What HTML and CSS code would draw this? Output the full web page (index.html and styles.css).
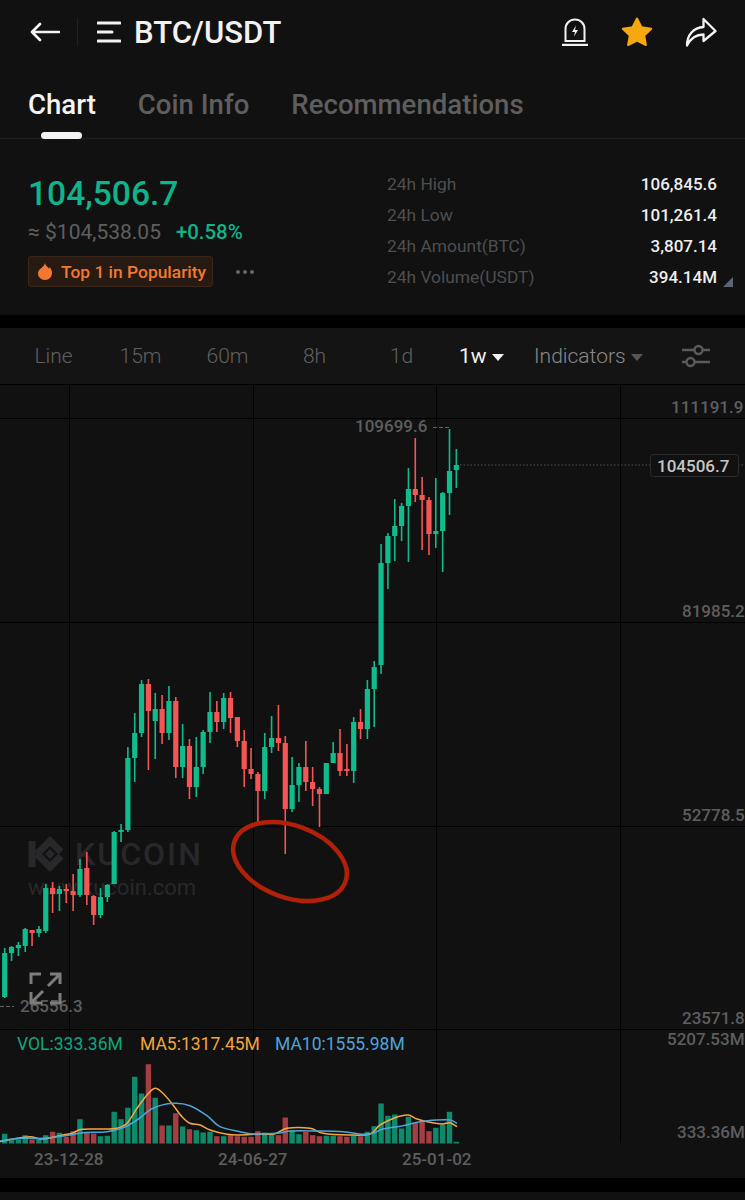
FILE: index.html
```html
<!DOCTYPE html>
<html lang="en">
<head>
    <meta charset="UTF-8">
    <meta name="viewport" content="width=device-width, initial-scale=1.0">
    <title>BTC/USDT</title>
    <link rel="stylesheet" href="styles.css">
</head>
<body>
    <header class="topbar">
        <svg class="icon-back" viewBox="0 0 30 20" width="30" height="20">
            <path d="M10 2 L2 10 L10 18 M2 10 H29" fill="none" stroke="#f2f2f2" stroke-width="2.6" stroke-linecap="round" stroke-linejoin="round"/>
        </svg>
        <div class="divider"></div>
        <svg class="icon-menu" viewBox="0 0 24 22" width="24" height="22">
            <path d="M1 2 H23 M1 11 H15 M1 20 H23" fill="none" stroke="#f2f2f2" stroke-width="3" stroke-linecap="round"/>
        </svg>
        <div class="pair">BTC/USDT</div>
        <div class="top-actions">
            <svg viewBox="0 0 28 28" width="28" height="28">
                <path d="M4.5 23 V11 C4.5 5.500 8.500 1.500 14 1.500 C19.500 1.500 23.500 5.500 23.500 11 V23 Z" fill="none" stroke="#f2f2f2" stroke-width="2"/>
                <path d="M1 27 H27" stroke="#f2f2f2" stroke-width="2.4"/>
                <path d="M15 7.500 L11 14 H14 L13 18.500 L17 12 H14 Z" fill="#f2f2f2"/>
            </svg>
            <svg viewBox="0 0 32 30" width="32" height="30">
                <path d="M16 1.500 L20.500 10.300 L30.200 11.700 L23.200 18.500 L24.900 28 L16 23.500 L7.100 28 L8.800 18.500 L1.800 11.700 L11.500 10.300 Z" fill="#f6a80f" stroke="#f6a80f" stroke-width="2" stroke-linejoin="round"/>
            </svg>
            <svg viewBox="0 0 32 30" width="32" height="30">
                <path d="M2 28.500 C2 18 8.500 10.500 18.500 10 V2 L30.500 14 L18.500 24 V17.500 C11 17.500 5.500 21.500 2 28.500 Z" fill="none" stroke="#f2f2f2" stroke-width="2.300" stroke-linejoin="round"/>
            </svg>
        </div>
    </header>

    <nav class="tabs">
        <a class="tab active" href="#">Chart</a>
        <a class="tab" href="#">Coin Info</a>
        <a class="tab" href="#">Recommendations</a>
    </nav>

    <section class="stats">
        <div class="stats-left">
            <div class="price">104,506.7</div>
            <div class="sub-price">
                <span class="usd">≈ $104,538.05</span>
                <span class="change">+0.58%</span>
            </div>
            <div class="badge-row">
                <div class="badge">
                    <svg viewBox="0 0 14 17" width="14" height="17">
                        <path d="M7 0 C7.500 3 10 4 11 5.500 C11.500 5 11.700 4.500 11.800 4 C13.200 6 14 8 14 10 C14 14 11 17 7 17 C3 17 0 14 0 10.500 C0 7 3 5.500 4.500 4 C5.800 2.800 6.800 1.500 7 0 Z" fill="#f4782f"/>
                    </svg>
                    <span>Top 1 in Popularity</span>
                </div>
                <div class="dots"><i></i><i></i><i></i></div>
            </div>
        </div>
        <dl class="stats-right">
            <div class="row"><dt>24h High</dt><dd>106,845.6</dd></div>
            <div class="row"><dt>24h Low</dt><dd>101,261.4</dd></div>
            <div class="row"><dt>24h Amount(BTC)</dt><dd>3,807.14</dd></div>
            <div class="row"><dt>24h Volume(USDT)</dt><dd>394.14M</dd></div>
            <div class="corner"></div>
        </dl>
    </section>

    <div class="band"></div>

    <div class="toolbar">
        <a class="period" href="#">Line</a>
        <a class="period" href="#">15m</a>
        <a class="period" href="#">60m</a>
        <a class="period" href="#">8h</a>
        <a class="period" href="#">1d</a>
        <a class="current" href="#">1w<i class="caret"></i></a>
        <a class="indicators" href="#">Indicators<i class="caret"></i></a>
        <svg class="icon-settings" viewBox="0 0 30 24" width="30" height="24">
            <g fill="none" stroke="#5a5a5a" stroke-width="2.400">
                <path d="M1 6 H13 M22 6 H29 M1 18 H5 M14 18 H29"/>
                <circle cx="17.500" cy="6" r="4"/>
                <circle cx="9.500" cy="18" r="4"/>
            </g>
        </svg>
    </div>

    <div class="chart">
        <svg id="chartSvg" viewBox="0 384 745 794" width="745" height="794">
            <g class="grid">
                <path d="M0 384.500 H745 M0 418.500 H745 M0 622.500 H745 M0 826.500 H745 M0 1029.500 H745"/>
                <path d="M69.500 384 V1143 M253.500 384 V1143 M436.500 384 V1143 M620.500 384 V1143"/>
            </g>

            <g class="watermark">
                <path d="M32 841 V867 M37 854 L50 841 L61 852 M37 854 L50 867 L61 856" fill="none" stroke-width="7"/>
                <path d="M50 849 L55 854 L50 859 L45 854 Z" stroke="none"/>
                <text class="wm-big" x="75" y="865">KUCOIN</text>
                <text class="wm-small" x="28" y="895">www.kucoin.com</text>
            </g>

            <g id="volumes"></g>
            <g id="candles"></g>
            <path id="ma5" class="ma ma5"/>
            <path id="ma10" class="ma ma10"/>

            <path class="dots-line" d="M460 465 H650 M738 465 H745"/>
            <path class="dash-line" d="M433 427.500 H449 M0 1006.500 H14"/>

            <text class="axis" x="671" y="413">111191.9</text>
            <text class="axis" x="682" y="617">81985.2</text>
            <text class="axis" x="682" y="821">52778.5</text>
            <text class="axis" x="682" y="1024">23571.8</text>
            <text class="axis" x="667" y="1045">5207.53M</text>
            <text class="axis" x="677" y="1138">333.36M</text>
            <text class="axis" x="355" y="432">109699.6</text>
            <text class="axis" x="20" y="1012">26556.3</text>

            <rect class="tag" x="650.500" y="454.500" width="88" height="22" rx="3"/>
            <text class="tag-text" x="657" y="472">104506.7</text>

            <text class="legend vol" x="17" y="1050">VOL:333.36M</text>
            <text class="legend ma5-text" x="140" y="1050">MA5:1317.45M</text>
            <text class="legend ma10-text" x="275" y="1050">MA10:1555.98M</text>

            <text class="date" x="34" y="1165">23-12-28</text>
            <text class="date" x="218" y="1165">24-06-27</text>
            <text class="date" x="402" y="1165">25-01-02</text>

            <path class="expand" d="M31 984 V974 H41 M50 974 H60 V984 M60 974 L48 986 M31 992 V1003 H42 M31 1003 L43 991 M50 1003 H60 V993"/>

            <ellipse class="mark" cx="290" cy="861.500" rx="59" ry="36" transform="rotate(20 290 861.500)"/>
        </svg>
    </div>

    <div class="band band-bottom"></div>

    <script src="script.js"></script>
</body>
</html>
```

FILE: styles.css
```css
* {
    margin: 0;
    padding: 0;
    box-sizing: border-box;
    font-family: Roboto, 'Liberation Sans', sans-serif;
}

body {
    background: #111112;
    color: #fff;
    overflow: hidden;
}

a {
    text-decoration: none;
}

.topbar {
    height: 64px;
    display: flex;
    align-items: center;
    padding-left: 30px;
}

.divider {
    width: 1px;
    height: 28px;
    background: #222;
    margin: 0 19px 0 17px;
}

.icon-menu {
    margin-right: 13px;
}

.pair {
    font-size: 31px;
    font-weight: 500;
    color: #f2f2f2;
}

.top-actions {
    margin-left: auto;
    display: flex;
    align-items: center;
    gap: 32px;
    padding-right: 28px;
}

.tabs {
    height: 75px;
    display: flex;
    gap: 42px;
    padding: 22px 0 0 28px;
    border-bottom: 1px solid #1f1f20;
}

.tab {
    position: relative;
    font-size: 27.6px;
    font-weight: 500;
    color: #5e5e5e;
    line-height: 38px;
}

.tab.active {
    color: #f4f4f4;
}

.tab.active::after {
    content: '';
    position: absolute;
    left: 13px;
    width: 41px;
    height: 7px;
    top: 46px;
    background: #f2f2f2;
    border-radius: 4px;
}

.stats {
    height: 176px;
    display: flex;
    justify-content: space-between;
    padding: 0 28px;
}

.price {
    font-size: 33.6px;
    font-weight: 500;
    color: #10b48a;
    margin-top: 35px;
    line-height: 40px;
}

.sub-price {
    display: flex;
    gap: 15px;
    font-size: 21px;
    line-height: 24px;
    margin-top: 6px;
}

.usd {
    color: #5f5f5f;
}

.change {
    color: #10b48a;
    font-weight: 500;
    font-size: 20.4px;
}

.badge-row {
    display: flex;
    align-items: center;
    gap: 23px;
    margin-top: 12px;
}

.badge {
    height: 31px;
    width: 185px;
    display: flex;
    align-items: center;
    gap: 9px;
    padding-left: 9px;
    background: #271a13;
    border: 1px solid #3a2619;
    border-radius: 3px;
    font-size: 17.4px;
    font-weight: 500;
    color: #f4782f;
}

.dots {
    display: flex;
    gap: 3px;
}

.dots i {
    width: 4px;
    height: 4px;
    background: #666;
    border-radius: 50%;
}

.stats-right {
    position: relative;
    width: 330px;
    padding-top: 30px;
}

.row {
    display: flex;
    justify-content: space-between;
    height: 31px;
    line-height: 31px;
}

dt {
    font-size: 17.4px;
    color: #4e4e4e;
}

dd {
    font-size: 17px;
    font-weight: 500;
    color: #eee;
}

.corner {
    position: absolute;
    right: -16px;
    top: 138px;
    border-left: 10px solid transparent;
    border-bottom: 10px solid #5b6672;
}

.band {
    height: 13px;
    background: #000;
}

.toolbar {
    height: 56px;
    display: flex;
    align-items: center;
    background: #141415;
    padding-left: 10px;
    font-size: 21px;
    position: relative;
}

.period {
    width: 87px;
    text-align: center;
    color: #606060;
    font-weight: 300;
}

.current {
    margin-left: 14px;
    color: #f2f2f2;
    display: flex;
    align-items: center;
    width: 75px;
}

.indicators {
    color: #8a8a8a;
    display: flex;
    align-items: center;
    font-weight: 300;
}

.caret {
    display: inline-block;
    margin-left: 5px;
    margin-top: 3px;
    border-left: 6px solid transparent;
    border-right: 6px solid transparent;
    border-top: 7px solid currentColor;
}

.indicators .caret {
    color: #555;
}

.icon-settings {
    margin-left: auto;
    margin-right: 34px;
}

.chart {
    height: 794px;
}

#chartSvg {
    display: block;
}

.grid path {
    stroke: #000;
    stroke-width: 1;
    fill: none;
}

.watermark {
    stroke: #28282a;
    fill: #28282a;
}

.wm-big {
    font-size: 32px;
    font-weight: 500;
    letter-spacing: 2px;
    stroke: none;
}

.wm-small {
    font-size: 22px;
    stroke: none;
}

.ma {
    fill: none;
    stroke-width: 1.500;
    stroke-linejoin: round;
}

.ma5 {
    stroke: #f5a742;
}

.ma10 {
    stroke: #4ea5d9;
}

.dots-line {
    stroke: #555;
    stroke-dasharray: 1.500 2;
    fill: none;
}

.dash-line {
    stroke: #666;
    stroke-dasharray: 4 2;
    fill: none;
}

.axis {
    font-size: 17px;
    font-weight: 500;
    fill: #5e5e5e;
}

.tag {
    fill: #111112;
    stroke: #2c2c2c;
}

.tag-text {
    font-size: 17px;
    font-weight: 500;
    fill: #c6c6c6;
}

.legend {
    font-size: 17.5px;
}

.vol {
    fill: #10a67f;
}

.ma5-text {
    fill: #f0a63c;
}

.ma10-text {
    fill: #4ea5d9;
}

.date {
    font-size: 17px;
    font-weight: 500;
    fill: #5e5e5e;
}

.expand {
    fill: none;
    stroke: #7d7d7d;
    stroke-width: 3;
}

.mark {
    fill: none;
    stroke: #b02108;
    stroke-width: 4.500;
}

.band-bottom {
    height: 14px;
}
```

FILE: script.js
```js
const GREEN = '#10bb8c';
const RED = '#f45656';
const VOL_GREEN = '#0e8a6b';
const VOL_RED = '#a43e42';
const VOL_BASE = 1143.5;

// color, high, body top, body bottom, low, volume height
const candles = [
    ['g', 948, 953, 997, 998, 9.7], ['g', 946, 947, 953, 961, 3.3], ['g', 942, 945, 948, 956, 4.3],
    ['g', 928, 929, 946, 952, 8.3], ['r', 930, 930, 933, 946, 4], ['g', 926, 929, 933, 937, 5],
    ['g', 884, 888, 931, 933, 8.3], ['r', 882, 888, 894, 913, 11.7], ['g', 886, 889, 894, 911, 10.7],
    ['r', 884, 889, 891, 903, 6.7], ['r', 874, 891, 895, 911, 12.3], ['g', 859, 869, 895, 897, 24.3],
    ['r', 852, 868, 895, 905, 11.7], ['r', 895, 896, 915, 925, 10], ['g', 888, 897, 915, 918, 7.3],
    ['g', 884, 885, 897, 902, 7.7], ['g', 831, 832, 884, 884, 31.7], ['g', 824, 830, 832, 842, 24.3],
    ['g', 747, 758, 830, 832, 35.7], ['g', 713, 733, 758, 782, 66.7], ['g', 680, 684, 733, 737, 50],
    ['r', 679, 684, 711, 770, 79.3], ['g', 693, 709, 721, 759, 45.7], ['r', 695, 709, 733, 744, 18],
    ['g', 686, 701, 733, 740, 18], ['r', 697, 701, 767, 778, 30.3], ['g', 724, 746, 767, 778, 17],
    ['r', 739, 746, 787, 799, 14.3], ['g', 737, 767, 787, 797, 13.3], ['g', 730, 732, 767, 774, 11],
    ['g', 692, 712, 732, 743, 11.7], ['r', 701, 712, 722, 732, 7.3], ['g', 693, 698, 722, 729, 7.3],
    ['r', 692, 698, 718, 733, 8.3], ['r', 717, 717, 741, 747, 7.3], ['r', 730, 741, 769, 787, 6.7],
    ['r', 748, 769, 774, 779, 6.7], ['r', 772, 774, 791, 822, 12.3], ['g', 733, 747, 791, 799, 11],
    ['g', 716, 738, 747, 753, 10], ['r', 705, 738, 743, 751, 8.3], ['r', 736, 743, 809, 854, 26],
    ['g', 757, 785, 809, 812, 13.3], ['g', 763, 767, 785, 802, 9.3], ['r', 741, 767, 782, 791, 11.7],
    ['r', 767, 782, 789, 806, 8.3], ['r', 787, 789, 794, 827, 7.3], ['g', 763, 763, 794, 794, 7.7],
    ['g', 742, 753, 763, 763, 7.7], ['r', 729, 753, 771, 776, 7.3], ['r', 744, 769, 771, 776, 6.7],
    ['g', 717, 722, 771, 783, 7.7], ['r', 709, 722, 729, 739, 7.3], ['g', 680, 689, 729, 739, 11.7],
    ['g', 661, 667, 689, 727, 17.3], ['g', 544, 563, 665, 674, 40], ['g', 533, 536, 563, 589, 27.7],
    ['g', 499, 526, 536, 561, 29], ['g', 503, 506, 526, 541, 15], ['g', 468, 489, 506, 562, 26.7],
    ['r', 438, 489, 495, 502, 20.7], ['r', 477, 495, 500, 550, 21.7], ['r', 497, 500, 534, 555, 12.3],
    ['g', 478, 531, 534, 548, 15.7], ['g', 492, 493, 531, 572, 19], ['g', 429, 471, 493, 515, 31.7],
    ['g', 449, 465, 470, 488, 1.7]
];

const ma5 = [
    [0, 1141.7], [12, 1139.3], [30, 1136.7], [43, 1139], [63, 1135], [72, 1133.3], [82, 1129.3], [103, 1129],
    [117, 1128.3], [127, 1123.3], [137, 1108.3], [147, 1095], [155, 1088.3], [163, 1093.3], [173, 1105],
    [182, 1116.7], [190, 1123.3], [200, 1125], [210, 1130], [227, 1134.3], [240, 1135], [257, 1134.3],
    [275, 1133.7], [287, 1128.3], [310, 1128.3], [323, 1133.3], [350, 1135], [370, 1134], [380, 1125],
    [395, 1117.7], [408, 1115], [417, 1119], [430, 1122.3], [442, 1124], [450, 1122.7], [457, 1126.7]
];

const ma10 = [
    [0, 1141], [20, 1138.3], [43, 1138.3], [70, 1135], [83, 1132.7], [107, 1131.7], [123, 1127.7], [137, 1120],
    [153, 1108.3], [173, 1103.3], [190, 1105.7], [207, 1115.7], [220, 1126.7], [240, 1131.7], [253, 1134],
    [277, 1133.3], [290, 1131], [317, 1131], [343, 1131.7], [363, 1134.3], [373, 1133.3], [383, 1129],
    [403, 1125.7], [420, 1121.7], [437, 1120], [450, 1120], [457, 1123.3]
];

function addRect(parent, x, y, w, h, color) {
    const r = document.createElementNS('http://www.w3.org/2000/svg', 'rect');
    r.setAttribute('x', x);
    r.setAttribute('y', y);
    r.setAttribute('width', w);
    r.setAttribute('height', h);
    r.setAttribute('fill', color);
    parent.appendChild(r);
}

function smoothPath(pts) {
    let d = `M${pts[0][0]} ${pts[0][1]}`;
    for (let i = 0; i < pts.length - 1; i++) {
        const p0 = pts[i - 1] || pts[i];
        const p1 = pts[i];
        const p2 = pts[i + 1];
        const p3 = pts[i + 2] || p2;
        const c1x = p1[0] + (p2[0] - p0[0]) / 6;
        const c1y = p1[1] + (p2[1] - p0[1]) / 6;
        const c2x = p2[0] - (p3[0] - p1[0]) / 6;
        const c2y = p2[1] - (p3[1] - p1[1]) / 6;
        d += ` C${c1x} ${c1y} ${c2x} ${c2y} ${p2[0]} ${p2[1]}`;
    }
    return d;
}

const candleGroup = document.getElementById('candles');
const volumeGroup = document.getElementById('volumes');

candles.forEach((c, i) => {
    const x = 4.7 + i * 6.843;
    const color = c[0] === 'g' ? GREEN : RED;
    addRect(candleGroup, x - 0.8, c[1], 1.6, c[4] - c[1], color);
    addRect(candleGroup, x - 2.6, c[2], 5.2, Math.max(c[3] - c[2], 2), color);
    addRect(volumeGroup, x - 2.7, VOL_BASE - c[5], 5.4, c[5], c[0] === 'g' ? VOL_GREEN : VOL_RED);
});

document.getElementById('ma5').setAttribute('d', smoothPath(ma5));
document.getElementById('ma10').setAttribute('d', smoothPath(ma10));
```
